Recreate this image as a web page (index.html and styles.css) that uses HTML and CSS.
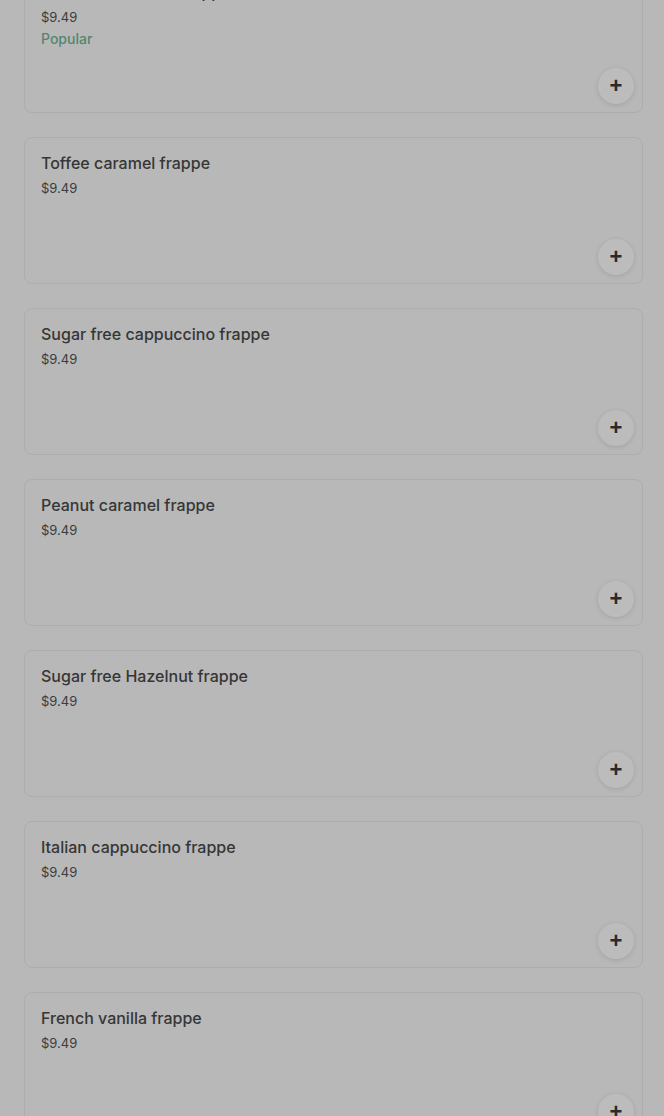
FILE: index.html
```html
<!DOCTYPE html>
<html lang="en">
<head>
  <meta charset="UTF-8">
  <meta name="viewport" content="width=device-width, initial-scale=1.0">
  <title>Frappes</title>
  <link rel="stylesheet" href="styles.css">
</head>
<body>
  <div class="menu-list">
    <div class="item-card">
      <div class="item-name">Classic chocolate frappe</div>
      <div class="item-price">$9.49</div>
      <div class="item-tag">Popular</div>
      <button class="add-button">+</button>
    </div>

    <div class="item-card">
      <div class="item-name">Toffee caramel frappe</div>
      <div class="item-price">$9.49</div>
      <button class="add-button">+</button>
    </div>

    <div class="item-card">
      <div class="item-name">Sugar free cappuccino frappe</div>
      <div class="item-price">$9.49</div>
      <button class="add-button">+</button>
    </div>

    <div class="item-card">
      <div class="item-name">Peanut caramel frappe</div>
      <div class="item-price">$9.49</div>
      <button class="add-button">+</button>
    </div>

    <div class="item-card">
      <div class="item-name">Sugar free Hazelnut frappe</div>
      <div class="item-price">$9.49</div>
      <button class="add-button">+</button>
    </div>

    <div class="item-card">
      <div class="item-name">Italian cappuccino frappe</div>
      <div class="item-price">$9.49</div>
      <button class="add-button">+</button>
    </div>

    <div class="item-card">
      <div class="item-name">French vanilla frappe</div>
      <div class="item-price">$9.49</div>
      <button class="add-button">+</button>
    </div>
  </div>
</body>
</html>
```

FILE: styles.css
```css
body {
  margin: 0;
  padding: 0;
  font-family: Inter, "Noto Sans", Arial, sans-serif;
  color: #353535;
  background-color: #b8b8b8;
  overflow: hidden;
}

.menu-list {
  display: flex;
  flex-direction: column;
  gap: 24px;
  margin-top: -34px;
  padding: 0 21px 0 24px;
}

.item-card {
  display: flex;
  flex-direction: column;
  box-sizing: border-box;
  height: 147px;
  padding: 15px 16px 8px 16px;
  border: 1px solid #adadad;
  border-radius: 8px;
}

.item-name {
  font-size: 16px;
  font-weight: 500;
  line-height: 20px;
  color: #363636;
}

.item-price {
  margin-top: 6px;
  font-size: 13px;
  line-height: 18px;
  color: #3c3c3c;
}

.item-tag {
  margin-top: 4px;
  font-size: 14px;
  font-weight: 500;
  line-height: 18px;
  color: #52866f;
}

.add-button {
  align-self: flex-end;
  margin-top: auto;
  margin-right: -8px;
  width: 36px;
  height: 36px;
  padding: 0;
  border: none;
  border-radius: 50%;
  background-color: #bcbcbc;
  box-shadow: 0 1px 5px rgba(0, 0, 0, 0.12);
  font-family: Arial, sans-serif;
  font-size: 22px;
  font-weight: 700;
  line-height: 36px;
  color: #2a2a2a;
  cursor: pointer;
}
```
